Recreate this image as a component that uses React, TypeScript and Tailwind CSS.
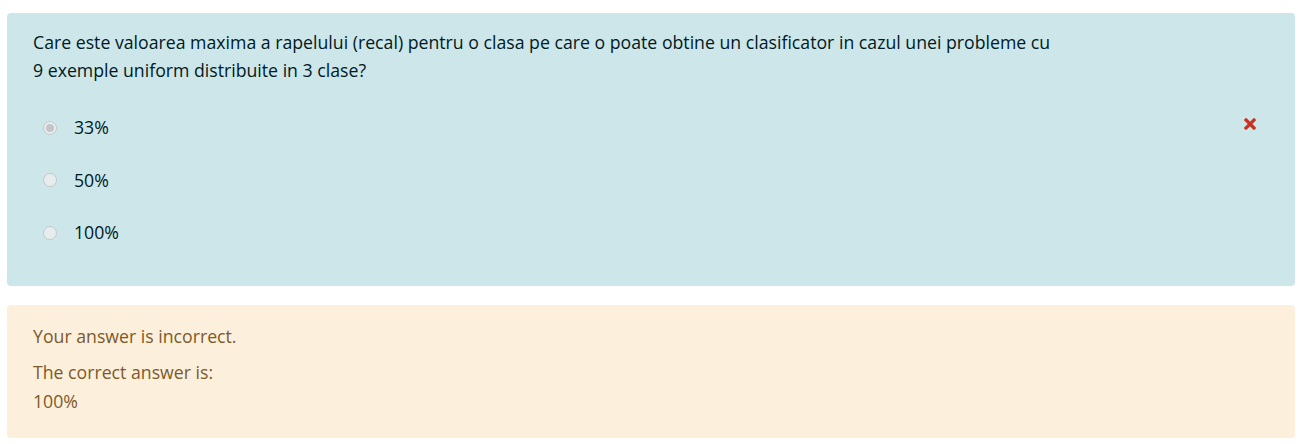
import React from 'react';

const options = [
  { label: '33%', checked: true },
  { label: '50%', checked: false },
  { label: '100%', checked: false },
];

function Radio({ checked }: { checked: boolean }) {
  return (
    <span className="flex h-[14px] w-[14px] items-center justify-center rounded-full border border-[#c3c9cb] bg-[#e7edef]">
      {checked && <span className="h-[8px] w-[8px] rounded-full bg-[#c2c6c8]" />}
    </span>
  );
}

function WrongIcon() {
  return (
    <svg width="12" height="12" viewBox="0 0 12 12" className="block">
      <path d="M2 2L10 10M10 2L2 10" stroke="#ca3120" strokeWidth="3.2" strokeLinecap="square" />
    </svg>
  );
}

export default function App() {
  return (
    <div className="min-h-[444px] bg-white pl-[7px] pt-[13px] text-[17.7px] font-['Open_Sans',sans-serif]">
      <div className="w-[1288px] h-[273px] rounded-[4px] bg-[#cce6ea] px-[26px] pt-[15px] text-[#001a1e]">
        <p className="leading-[28px]">
          Care este valoarea maxima a rapelului (recal) pentru o clasa pe care o poate obtine un clasificator in cazul unei probleme cu
          <br />
          9 exemple uniform distribuite in 3 clase?
        </p>
        <div className="mt-[30px] flex flex-col gap-[25.5px]">
          {options.map((opt) => (
            <div key={opt.label} className="flex h-[27px] items-center">
              <span className="ml-[10px] mr-[17px]">
                <Radio checked={opt.checked} />
              </span>
              <span className="leading-[27px]">{opt.label}</span>
              {opt.checked && (
                <span className="ml-auto mr-[13px] -mt-[8px]">
                  <WrongIcon />
                </span>
              )}
            </div>
          ))}
        </div>
      </div>
      <div className="mt-[19px] w-[1288px] h-[133px] rounded-[4px] bg-[#fcefdc] px-[26px] pt-[18px] text-[#7d5a29]">
        <p className="leading-[27px]">Your answer is incorrect.</p>
        <p className="mt-[9px] leading-[27px]">The correct answer is:</p>
        <p className="mt-[2px] leading-[27px]">100%</p>
      </div>
    </div>
  );
}
